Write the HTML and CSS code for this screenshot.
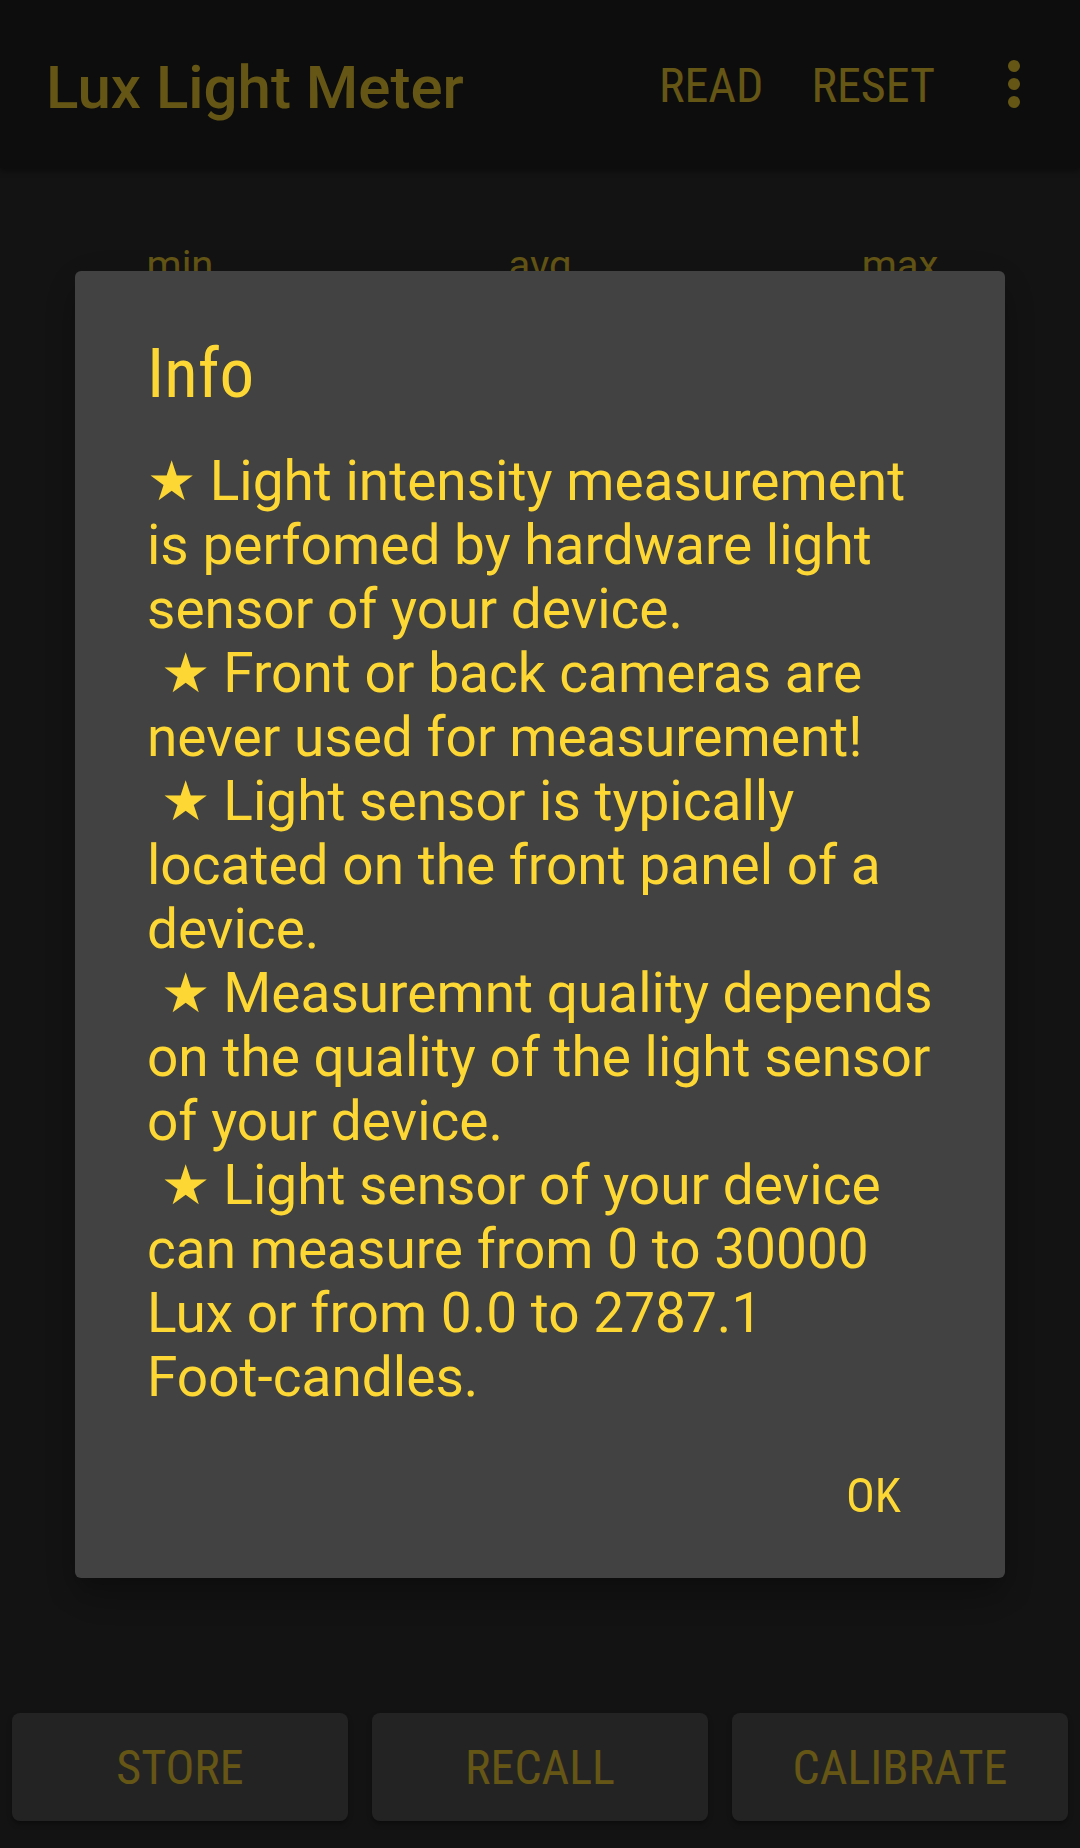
FILE: index.html
```html
<!DOCTYPE html>
<html>

<head>
    <title>Lux Light Meter</title>
    <link rel="stylesheet" href="styles.css">
</head>

<body>
    <div id="app">
        <header class="app-bar">
            <h1 class="app-title">Lux Light Meter</h1>
            <div class="app-actions">
                <span class="action">READ</span>
                <span class="action">RESET</span>
                <svg class="overflow" viewBox="0 0 24 24" width="72" height="72">
                    <circle cx="12" cy="6" r="2" />
                    <circle cx="12" cy="12" r="2" />
                    <circle cx="12" cy="18" r="2" />
                </svg>
            </div>
        </header>

        <main class="meter">
            <div class="stat-labels">
                <span>min</span>
                <span>avg</span>
                <span>max</span>
            </div>
        </main>

        <footer class="button-bar">
            <button class="bar-button">STORE</button>
            <button class="bar-button">RECALL</button>
            <button class="bar-button">CALIBRATE</button>
        </footer>
    </div>

    <!-- info dialog -->
    <div class="scrim">
        <div class="dialog">
            <h2 class="dialog-title">Info</h2>
            <p class="dialog-text">★ Light intensity measurement is perfomed by hardware light sensor of your device.<br> ★ Front or back cameras are never used for measurement!<br> ★ Light sensor is typically located on the front panel of a device.<br> ★ Measuremnt quality depends on the quality of the light sensor of your device.<br> ★ Light sensor of your device can measure from 0 to 30000 Lux or from 0.0 to 2787.1 <span class="nowrap">Foot-candles.</span></p>
            <div class="dialog-actions">
                <button class="dialog-button">OK</button>
            </div>
        </div>
    </div>
</body>

</html>
```

FILE: styles.css
```css
body {
    margin: 0;
    width: 1080px;
    height: 1848px;
    overflow: hidden;
    background-color: #303030;
    font-family: Roboto, "Noto Sans", sans-serif;
    color: #fdd835;
}

#app {
    display: flex;
    flex-direction: column;
    height: 100%;
}

.app-bar {
    position: relative;
    z-index: 1;
    display: flex;
    align-items: center;
    height: 168px;
    padding: 0 30px 0 46px;
    background-color: #212121;
    box-shadow: 0 3px 6px rgba(0, 0, 0, 0.4);
}

.app-title {
    flex: 1;
    margin: 0;
    padding-top: 7px;
    font-size: 60px;
    font-weight: 500;
}

.app-actions {
    display: flex;
    align-items: center;
}

/* condensed caps used on every button */
.action,
.bar-button,
.dialog-button,
.dialog-title {
    font-family: "Roboto Condensed", Roboto, sans-serif;
    font-stretch: condensed;
    font-weight: 400;
}

.action {
    padding: 3px 24px 0;
    font-size: 48px;
}

.overflow {
    margin-left: 19px;
    fill: #fdd835;
}

.meter {
    flex: 1;
    padding-top: 74px;
}

.stat-labels {
    display: grid;
    grid-template-columns: repeat(3, 1fr);
    text-align: center;
    font-size: 40px;
}

.button-bar {
    display: flex;
    gap: 24px;
    padding: 0 12px 27px;
}

.bar-button {
    flex: 1;
    height: 108px;
    border: none;
    border-radius: 8px;
    background-color: #585858;
    color: #fdd835;
    font-size: 48px;
    box-shadow: 0 3px 5px rgba(0, 0, 0, 0.35);
}

.scrim {
    position: fixed;
    z-index: 2;
    top: 0;
    left: 0;
    right: 0;
    bottom: 0;
    display: flex;
    align-items: center;
    justify-content: center;
    background-color: rgba(0, 0, 0, 0.6);
}

.dialog {
    width: 930px;
    padding-top: 61px;
    background-color: #424242;
    border-radius: 6px;
    box-shadow: 0 24px 38px 3px rgba(0, 0, 0, 0.14),
        0 9px 46px 8px rgba(0, 0, 0, 0.12),
        0 11px 15px -7px rgba(0, 0, 0, 0.2);
}

.dialog-title {
    margin: 0 72px;
    font-size: 69px;
    line-height: 84px;
}

.dialog-text {
    margin: 33px 72px 0;
    font-size: 55px;
    line-height: 64px;
    white-space: pre-wrap;
}

.nowrap {
    white-space: nowrap;
}

.dialog-actions {
    display: flex;
    align-items: center;
    justify-content: flex-end;
    height: 169px;
    padding: 4px 104px 0 0;
    box-sizing: border-box;
}

.dialog-button {
    padding: 0;
    border: none;
    background: none;
    color: #fdd835;
    font-size: 48px;
}
```
